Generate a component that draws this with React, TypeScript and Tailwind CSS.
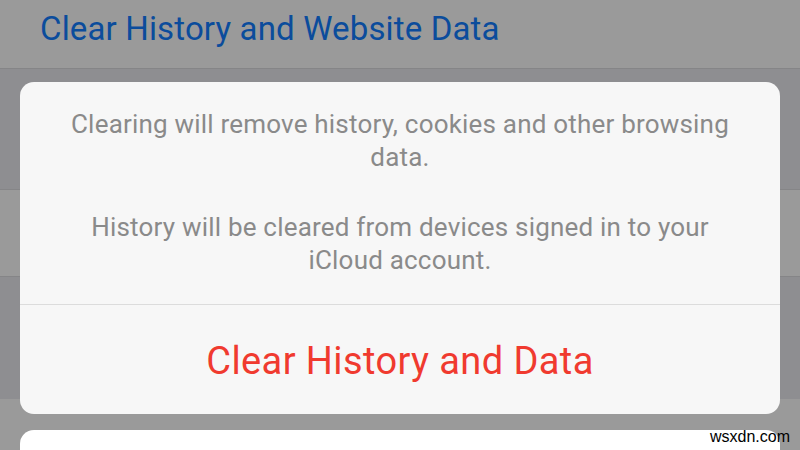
import React from 'react';

const sf = { fontFamily: 'Roboto, "Liberation Sans", sans-serif' };

function BackgroundList() {
  return (
    <div className="flex flex-col h-[450px]">
      <div className="h-[69px] bg-[#9a9a9a] border-b border-[#858587] flex items-center pl-[40px]">
        <span className="text-[33px] leading-none text-[#0b4c9c] tracking-[0.15px] -mt-[12px]">
          Clear History and Website Data
        </span>
      </div>
      <div className="h-[121px] bg-[#8e8e91] border-b border-[#858587]" />
      <div className="h-[87px] bg-[#9a9a9a] border-b border-[#858587]" />
      <div className="h-[122px] bg-[#8e8e91]" />
      <div className="flex-1 bg-[#9a9a9a]" />
    </div>
  );
}

function ActionSheet() {
  return (
    <div className="absolute inset-0 px-[20px] pt-[82px] flex flex-col gap-[16px]">
      <div className="h-[332px] bg-[#f7f7f7] rounded-[14px] flex flex-col overflow-hidden">
        <div className="h-[222px] flex flex-col items-center pt-[26px] text-[#8a8a8a] text-[26px] leading-[33px] tracking-[0.2px] text-center">
          <p>
            Clearing will remove history, cookies and other browsing
            <br />
            data.
          </p>
          <p className="mt-[37px]">
            History will be cleared from devices signed in to your
            <br />
            iCloud account.
          </p>
        </div>
        <div className="h-px bg-[#dcdcdc]" />
        <button className="flex-1 flex items-center justify-center pt-[4px] text-[38px] text-[#f03a2f] tracking-[0.4px]">
          Clear History and Data
        </button>
      </div>
      <div className="flex-1 bg-white rounded-t-[14px]" />
    </div>
  );
}

export default function App() {
  return (
    <div className="relative w-[800px] h-[450px] overflow-hidden" style={sf}>
      <BackgroundList />
      <ActionSheet />
      <span className="absolute right-[10px] bottom-[1px] text-[16px] text-black" style={{ fontFamily: '"Liberation Sans", Arial, sans-serif' }}>
        wsxdn.com
      </span>
    </div>
  );
}
